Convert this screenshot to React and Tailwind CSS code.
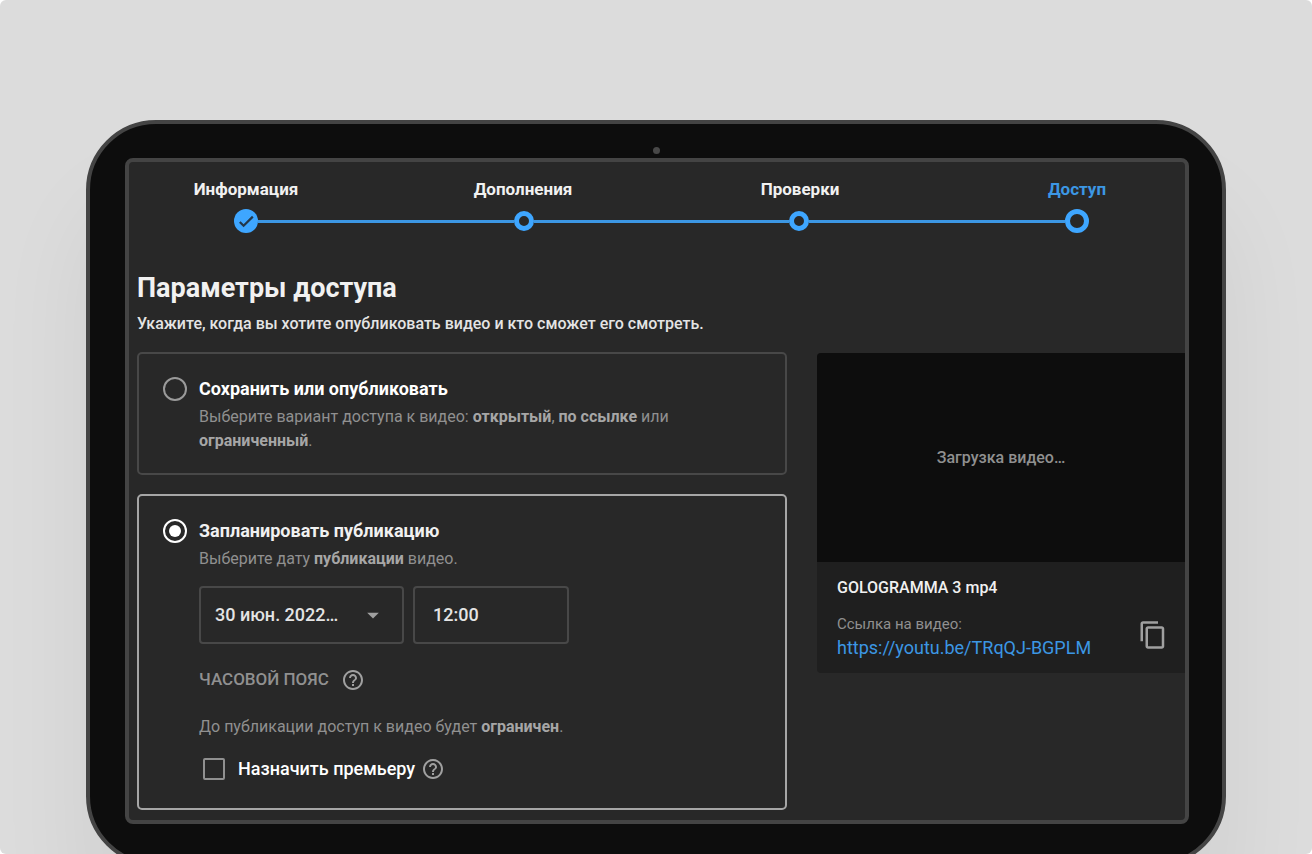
import { Fragment } from "react"
import { MdArrowDropDown, MdContentCopy, MdHelpOutline } from "react-icons/md"

const steps = [
    { title: "Информация", status: "done" },
    { title: "Дополнения", status: "open" },
    { title: "Проверки", status: "open" },
    { title: "Доступ", status: "current" },
]

function StepDot({ status }) {
    if (status === "done") {
        return (
            <svg viewBox="0 0 24 24" className="size-6 shrink-0">
                <circle cx="12" cy="12" r="12" fill="#3ea6ff" />
                <path d="M5.8 13 L9.6 16.8 L18.8 7.6" fill="none" stroke="#23384b" strokeWidth="2.2" />
            </svg>
        )
    }
    if (status === "current") {
        return <span className="size-6 shrink-0 rounded-full border-[5px] border-[#3ea6ff]" />
    }
    return <span className="size-5 shrink-0 rounded-full border-[5px] border-[#3ea6ff]" />
}

function Stepper() {
    return (
        <nav className="pt-[15px]">
            <div className="flex justify-between pl-[61px] pr-[52px]">
                {steps.map((step) => (
                    <button
                        key={step.title}
                        type="button"
                        className={
                            step.status === "current"
                                ? "w-28 text-[17px] leading-6 font-bold text-[#3c97e4]"
                                : "w-28 text-[17px] leading-6 font-bold text-[#f1f1f1]"
                        }
                    >
                        {step.title}
                    </button>
                ))}
            </div>
            <div className="mt-2 flex items-center pl-[105px] pr-24">
                {steps.map((step, i) => (
                    <Fragment key={step.title}>
                        {i > 0 && <span className="h-[3px] flex-1 bg-[#3c97e4]" />}
                        <StepDot status={step.status} />
                    </Fragment>
                ))}
            </div>
        </nav>
    )
}

function Radio({ id, defaultChecked }) {
    return (
        <input
            id={id}
            type="radio"
            name="access"
            defaultChecked={defaultChecked}
            className="size-6 shrink-0 appearance-none rounded-full border-2 border-[#9a9a9a] checked:border-white checked:bg-white checked:bg-clip-content checked:p-1"
        />
    )
}

function Help({ label }) {
    return (
        <button type="button" aria-label={label} className="text-[#a0a0a0]">
            <MdHelpOutline className="size-6" />
        </button>
    )
}

function SaveCard() {
    return (
        <section className="flex gap-3 rounded-[5px] border-2 border-[#484848] pt-[23px] pr-6 pb-5 pl-6">
            <Radio id="save" />
            <div>
                <label htmlFor="save" className="block text-lg leading-6 font-bold text-white">
                    Сохранить или опубликовать
                </label>
                <p className="mt-1 max-w-[500px] text-base leading-6 text-[#909090]">
                    Выберите вариант доступа к видео: <b className="text-[#a6a6a6]">открытый</b>,{" "}
                    <b className="text-[#a6a6a6]">по ссылке</b> или <b className="text-[#a6a6a6]">ограниченный</b>.
                </p>
            </div>
        </section>
    )
}

function ScheduleCard() {
    return (
        <section className="flex gap-3 rounded-[5px] border-2 border-[#a6a6a6] pt-[23px] pr-6 pb-[27px] pl-6">
            <Radio id="schedule" defaultChecked />
            <div>
                <label htmlFor="schedule" className="block text-lg leading-6 font-bold text-[#f1f1f1]">
                    Запланировать публикацию
                </label>
                <p className="mt-1 text-base leading-6 text-[#909090]">
                    Выберите дату <b className="text-[#a6a6a6]">публикации</b> видео.
                </p>

                <div className="mt-[15px] flex gap-[9px] text-lg font-medium text-[#e4e4e4]">
                    <div className="flex h-[58px] w-[205px] items-center rounded-[4px] border-2 border-[#484848] pr-[15px] pl-[14px]">
                        <select aria-label="Дата публикации" className="min-w-0 flex-1 appearance-none">
                            <option>30 июн. 2022…</option>
                        </select>
                        <MdArrowDropDown className="size-7 shrink-0 text-[#a0a0a0]" />
                    </div>
                    <input
                        type="text"
                        aria-label="Время публикации"
                        defaultValue="12:00"
                        className="h-[58px] w-[156px] rounded-[4px] border-2 border-[#484848] px-[18px] pb-0.5"
                    />
                </div>

                <div className="mt-6 flex h-6 items-center gap-3">
                    <span className="text-[17px] font-medium text-[#909090]">ЧАСОВОЙ ПОЯС</span>
                    <Help label="О часовом поясе" />
                </div>

                <p className="mt-[23px] text-base leading-6 text-[#909090]">
                    До публикации доступ к видео будет <b className="text-[#a6a6a6]">ограничен</b>.
                </p>

                <div className="mt-[18px] flex h-6 items-center pl-1">
                    <input
                        id="premiere"
                        type="checkbox"
                        className="size-[22px] appearance-none rounded-[2px] border-2 border-[#909090] checked:bg-[#3ea6ff]"
                    />
                    <label htmlFor="premiere" className="mr-1.5 ml-[13px] text-lg leading-6 font-medium text-white">
                        Назначить премьеру
                    </label>
                    <Help label="О премьере" />
                </div>
            </div>
        </section>
    )
}

function Preview() {
    return (
        <aside className="mt-px self-start overflow-hidden rounded-l-[4px] bg-[#1f1f1f]">
            <div className="flex h-[209px] items-center justify-center bg-[#0d0d0d] text-base font-medium text-[#909090]">
                Загрузка видео…
            </div>
            <div className="flex h-[111px] items-center justify-between pr-[17px] pl-5">
                <div>
                    <h2 className="text-base leading-6 font-medium text-[#f1f1f1]">GOLOGRAMMA 3 mp4</h2>
                    <p className="mt-3 text-[15px] leading-6 text-[#909090]">Ссылка на видео:</p>
                    <a href="https://youtu.be/TRqQJ-BGPLM" className="block text-lg leading-6 text-[#3c97e4]">
                        https://youtu.be/TRqQJ-BGPLM
                    </a>
                </div>
                <button type="button" aria-label="Копировать ссылку" className="mt-[34px] text-[#a0a0a0]">
                    <MdContentCopy className="size-[30px]" />
                </button>
            </div>
        </aside>
    )
}

function App() {
    return (
        <main className="h-screen overflow-hidden rounded-md bg-[#dcdcdc] px-[86px] pt-[120px] font-['Roboto',sans-serif]">
            <div className="rounded-[70px] border-4 border-[#444444] bg-[#0d0d0d] pr-[33px] pb-[38px] pl-[35px] shadow-[0_80px_100px_rgba(0,0,0,0.06)]">
                <div className="flex h-[34px] items-end justify-center pr-0.5 pb-1">
                    <span className="size-[7px] rounded-full bg-[#484848]" />
                </div>

                <div className="rounded-[8px] border-4 border-[#444444] bg-[#282828] pb-[10px]">
                    <Stepper />

                    <header className="mt-[37px] pl-2">
                        <h1 className="text-[27px] leading-9 font-bold text-[#f1f1f1]">
                            Параметры доступа
                        </h1>
                        <p className="mt-1.5 text-base leading-6 font-medium text-[#e4e4e4]">
                            Укажите, когда вы хотите опубликовать видео и кто сможет его смотреть.
                        </p>
                    </header>

                    <div className="mt-4 grid grid-cols-[650fr_368fr] gap-[30px] pl-2">
                        <form className="flex flex-col gap-[19px]">
                            <SaveCard />
                            <ScheduleCard />
                        </form>
                        <Preview />
                    </div>
                </div>
            </div>
        </main>
    )
}

export default App
